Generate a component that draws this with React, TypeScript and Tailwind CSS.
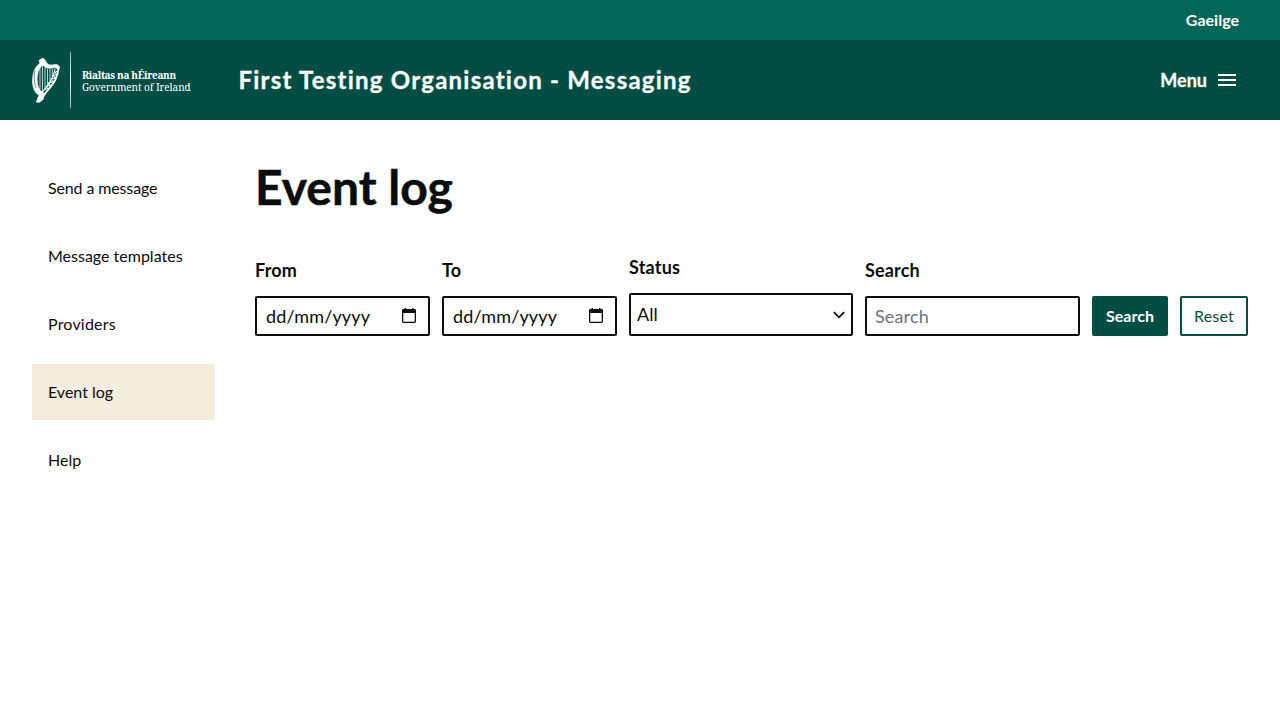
import React from "react";

function Harp() {
  return (
    <svg viewBox="0 0 28 46" className="h-[46px] w-7 shrink-0" fill="none" stroke="#fff" aria-hidden="true">
      <path
        d="M7.200 3.200 11 1l2.200 2.200L15 6.400c2.800 2.200 5.200 1.700 8 1.200 2.600-.4 4.500 1.300 4.700 3.200-.3 1-.9 1.600-1.700 1.800-1.500-1.900-3.300-2-5.800-1.500-3.800.7-6.800-.1-9.200-2.700C6.500 10.500 5.400 16 5.200 22c-.1 6 1.300 10 4.200 12.200l1.700 3.100-2.400 3.200-2.200-2.600C2.400 35.500.2 29.500.5 22.500.9 14.800 3.500 9 8 6.200L7 3.600Z"
        fill="#fff"
        strokeWidth=".6"
      />
      <path d="M3 13.500c-1.200 5-1.200 12 1 17" stroke="#004d44" strokeWidth=".6" />
      <path d="M26.500 11.500c-.3 4-1.300 7.500-3.200 11.200-2.400 4.800-5.600 8.300-9.300 12.600-2 2.400-3.300 5-6 7.800" strokeWidth="1.900" />
      <path d="M22.800 12c-.4 4.500-2 8.500-4.800 13-2.300 3.800-5 7-8 10.800" strokeWidth="1.100" />
      <path d="m25.800 14-2.900 1.200 2 2.300-3.700 1 2.200 2.700-4.300.8 1.900 3-4.300.8 1.500 2.600-3.900.9 1.200 2.400-3.500.8" strokeWidth="1.100" />
      <path d="M5.500 41.500 9.500 35l2.700 1.500-1 5.800-3.600 2.900-3.500-.3 1.400-2Z" fill="#fff" strokeWidth=".8" />
      <path d="M8 10v22M10.500 9.500v25M13 11v21.500M15.500 12v17M18 12v13M20.300 12v8" strokeWidth=".75" />
    </svg>
  );
}

function DateField({ label }: { label: string }) {
  return (
    <div className="flex w-[175px] flex-col">
      <span className="mb-3 text-[18px] leading-7 font-bold tracking-[0.2px]">{label}</span>
      <div className="flex h-10 items-center justify-between rounded-xs border-2 border-[#0b0c0c] pr-[11px] pl-[9px] text-[18px] leading-7">
        <span className="tracking-[0.15px]">dd/mm/yyyy</span>
        <svg viewBox="0 0 16 18" className="mb-[1px] h-[18px] w-4" aria-hidden="true">
          <path d="M3.500 1h1.500v2H3.500ZM11 1h1.500v2H11Z" fill="#0b0c0c" />
          <path
            fillRule="evenodd"
            d="M2.500 2h11c.8 0 1.500.6 1.500 1.400v11.200c0 .8-.7 1.400-1.500 1.400h-11C1.700 16 1 15.400 1 14.600V3.400C1 2.600 1.700 2 2.500 2ZM2.300 6v8.700h11.400V6Z"
            fill="#0b0c0c"
          />
        </svg>
      </div>
    </div>
  );
}

const links = ["Send a message", "Message templates", "Providers", "Event log", "Help"];

export default function App() {
  return (
    <div className="min-h-screen bg-white font-['Lato',sans-serif] text-[#0b0c0c]">
      <div className="flex h-10 items-center justify-end bg-[#006658] pr-[41px] text-[16px] font-bold text-white">
        <a>Gaeilge</a>
      </div>
      <header className="flex h-20 items-center bg-[#004d44] pr-11 pl-8 text-white">
        <div className="flex w-[206.500px] items-center">
          <Harp />
          <div className="mr-[11px] ml-[10px] h-14 w-px bg-linear-to-b from-white/60 via-white to-white/60" />
          <div className="pt-[2px] font-['Noto_Serif','Liberation_Serif',serif] text-[10px] leading-3 whitespace-nowrap">
            <div className="font-bold tracking-[-0.32px]">Rialtas na hÉireann</div>
            <div className="tracking-[-0.05px]">Government of Ireland</div>
          </div>
        </div>
        <div className="text-2xl font-bold tracking-[1.230px] [-webkit-text-stroke:0.3px_currentColor]">First Testing Organisation - Messaging</div>
        <div className="ml-auto flex items-center gap-[11px]">
          <span className="text-[18px] font-bold [-webkit-text-stroke:0.3px_currentColor]">Menu</span>
          <svg viewBox="0 0 18 12" className="h-3 w-[18px]" fill="#fff" aria-hidden="true">
            <path d="M0 0h18v2H0ZM0 5h18v2H0ZM0 10h18v2H0Z" />
          </svg>
        </div>
      </header>
      <main className="flex gap-10 px-8 pt-10">
        <nav className="flex w-[183px] shrink-0 flex-col gap-3">
          {links.map((l) => (
            <a
              key={l}
              className={
                "flex h-14 items-center px-4 text-base " +
                (l === "Event log" ? "bg-[#f4ecdd]" : l === "Send a message" ? "tracking-[-0.13px]" : l === "Providers" ? "tracking-[0.2px]" : "")
              }
            >
              {l}
            </a>
          ))}
        </nav>
        <section className="min-w-0 flex-1">
          <h1 className="text-[48px] leading-[54px] font-bold [-webkit-text-stroke:0.5px_currentColor]">Event log</h1>
          <div className="mt-[39px] flex items-end gap-3">
            <DateField label="From" />
            <DateField label="To" />
            <div className="flex w-56 flex-col">
              <span className="mb-3 text-[18px] leading-7 font-bold tracking-[0.2px]">Status</span>
              <div className="flex h-[43px] items-center justify-between rounded-xs border-2 border-[#0b0c0c] px-1.5 text-[18px]">
                <span>All</span>
                <svg viewBox="0 0 12 8" className="h-2 w-3" fill="none" stroke="#0b0c0c" strokeWidth="1.700" aria-hidden="true">
                  <path d="m.8 1.200 5.200 5.200 5.200-5.200" />
                </svg>
              </div>
            </div>
            <div className="flex w-[215px] flex-col">
              <span className="mb-3 text-[18px] leading-7 font-bold tracking-[0.15px]">Search</span>
              <div className="flex h-10 items-center rounded-xs border-2 border-[#0b0c0c] px-2 text-[18px] tracking-[0.15px] text-[#6b7280]">Search</div>
            </div>
            <button className="h-10 w-[76px] rounded-xs bg-[#004d44] text-base font-bold text-white">Search</button>
            <button className="h-10 w-[68px] rounded-xs border-2 border-[#004d44] text-base tracking-[0.15px] text-[#004d44]">Reset</button>
          </div>
        </section>
      </main>
    </div>
  );
}
